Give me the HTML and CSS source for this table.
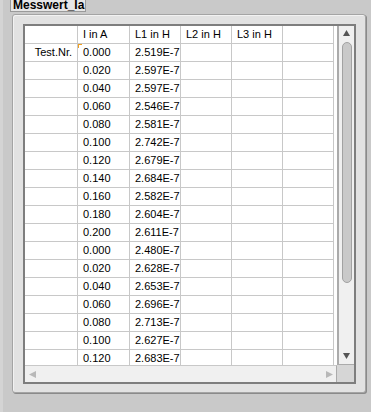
FILE: index.html
```html
<!DOCTYPE html>
<html lang="de">
<head>
    <meta charset="UTF-8">
    <meta name="viewport" content="width=device-width, initial-scale=1.0">
    <title>Messwert_Ia</title>
    <link rel="stylesheet" href="styles.css">
</head>
<body>
    <div class="caption">Messwert_Ia</div>
    <div class="frame">
        <div class="table-box">
            <div class="grid">
                <table>
                    <tr>
                        <th class="rowhead c1"></th>
                        <th class="c2">I in A</th>
                        <th class="c3">L1 in H</th>
                        <th class="c4">L2 in H</th>
                        <th class="c5">L3 in H</th>
                        <th class="c6"></th>
                    </tr>
                    <tr><th class="rowhead">Test.Nr.</th><td class="current">0.000</td><td>2.519E-7</td><td></td><td></td><td></td></tr>
                    <tr><th class="rowhead"></th><td>0.020</td><td>2.597E-7</td><td></td><td></td><td></td></tr>
                    <tr><th class="rowhead"></th><td>0.040</td><td>2.597E-7</td><td></td><td></td><td></td></tr>
                    <tr><th class="rowhead"></th><td>0.060</td><td>2.546E-7</td><td></td><td></td><td></td></tr>
                    <tr><th class="rowhead"></th><td>0.080</td><td>2.581E-7</td><td></td><td></td><td></td></tr>
                    <tr><th class="rowhead"></th><td>0.100</td><td>2.742E-7</td><td></td><td></td><td></td></tr>
                    <tr><th class="rowhead"></th><td>0.120</td><td>2.679E-7</td><td></td><td></td><td></td></tr>
                    <tr><th class="rowhead"></th><td>0.140</td><td>2.684E-7</td><td></td><td></td><td></td></tr>
                    <tr><th class="rowhead"></th><td>0.160</td><td>2.582E-7</td><td></td><td></td><td></td></tr>
                    <tr><th class="rowhead"></th><td>0.180</td><td>2.604E-7</td><td></td><td></td><td></td></tr>
                    <tr><th class="rowhead"></th><td>0.200</td><td>2.611E-7</td><td></td><td></td><td></td></tr>
                    <tr><th class="rowhead"></th><td>0.000</td><td>2.480E-7</td><td></td><td></td><td></td></tr>
                    <tr><th class="rowhead"></th><td>0.020</td><td>2.628E-7</td><td></td><td></td><td></td></tr>
                    <tr><th class="rowhead"></th><td>0.040</td><td>2.653E-7</td><td></td><td></td><td></td></tr>
                    <tr><th class="rowhead"></th><td>0.060</td><td>2.696E-7</td><td></td><td></td><td></td></tr>
                    <tr><th class="rowhead"></th><td>0.080</td><td>2.713E-7</td><td></td><td></td><td></td></tr>
                    <tr><th class="rowhead"></th><td>0.100</td><td>2.627E-7</td><td></td><td></td><td></td></tr>
                    <tr><th class="rowhead"></th><td>0.120</td><td>2.683E-7</td><td></td><td></td><td></td></tr>
                </table>
            </div>
            <div class="vscroll">
                <svg class="arrow" width="7" height="6" viewBox="0 0 7 6"><path d="M3.5 0 L7 6 L0 6 Z" fill="#555"/></svg>
                <div class="thumb"></div>
                <svg class="arrow down" width="7" height="6" viewBox="0 0 7 6"><path d="M0 0 L7 0 L3.5 6 Z" fill="#555"/></svg>
            </div>
            <div class="hscroll">
                <svg width="7" height="7" viewBox="0 0 7 7"><path d="M0 3.5 L7 0 L7 7 Z" fill="#b8b8b8"/></svg>
                <svg width="7" height="7" viewBox="0 0 7 7"><path d="M7 3.5 L0 0 L0 7 Z" fill="#b8b8b8"/></svg>
            </div>
            <div class="corner"></div>
        </div>
    </div>
</body>
</html>
```

FILE: styles.css
```css
body {
    margin: 0;
    height: 412px;
    overflow: hidden;
    background: linear-gradient(to right, #d4d4d4 3px, #c9c9c9 3px);
    font-family: "Liberation Sans", Arial, sans-serif;
}
.caption {
    width: fit-content;
    height: 11px;
    margin-left: 10px;
    padding: 0 1px 0 2px;
    border: 1px solid #9a9a9a;
    border-top: none;
    background: #e6e6e6;
    font-size: 12px;
    font-weight: bold;
    line-height: 11px;
    color: #000;
}
.frame {
    box-sizing: border-box;
    width: 354px;
    height: 379px;
    margin: 2px 0 0 12px;
    padding: 9px 0 0 10px;
    background: #e2e2e2;
    border: 1px solid #a4a4a4;
    border-radius: 3px;
    box-shadow: inset 1px 1px 0 #f2f2f2, 1px 1px 0 #8a8a8a;
}
.table-box {
    display: grid;
    grid-template-columns: 312px 17px;
    grid-template-rows: 339px 17px;
    width: 329px;
    border: 2px solid #7e7e7e;
}
.grid {
    background: #fff;
    overflow: hidden;
}
table {
    width: 309px;
    table-layout: fixed;
    border-collapse: separate;
    border-spacing: 0;
    font-size: 11px;
    color: #000;
}
th, td {
    box-sizing: border-box;
    padding: 0 0 0 5px;
    border-right: 1px solid #c8c8c8;
    border-bottom: 1px solid #c8c8c8;
    font-weight: normal;
    text-align: left;
    line-height: 17px;
    white-space: nowrap;
    overflow: hidden;
}
.c1 { width: 53px; }
.c2 { width: 52px; }
.c3, .c4, .c5, .c6 { width: 51px; }
.rowhead {
    padding: 0 5px 0 0;
    text-align: right;
}
/* orange corner on the active cell */
.current {
    position: relative;
}
.current::before {
    content: "";
    position: absolute;
    left: 0;
    top: 0;
    width: 3px;
    height: 3px;
    border-left: 1px solid #f0a020;
    border-top: 1px solid #f0a020;
}
.vscroll {
    box-sizing: border-box;
    display: flex;
    flex-direction: column;
    align-items: flex-start;
    padding: 4px 0 5px;
    background: #f0f0f0;
    border-left: 2px solid #ababab;
    border-bottom: 1px solid #ababab;
}
.vscroll .arrow {
    margin-left: 4px;
}
.vscroll .down {
    margin-top: auto;
}
.thumb {
    box-sizing: border-box;
    width: 10px;
    height: 241px;
    margin: 6px 0 0 3px;
    background: #c9c9c9;
    border: 1px solid #a2a2a2;
    border-radius: 5px;
}
.hscroll {
    box-sizing: border-box;
    display: flex;
    justify-content: space-between;
    align-items: center;
    padding: 0 3px 0 4px;
    background: #f0f0f0;
    border-top: 1px solid #c8c8c8;
    border-right: 1px solid #ababab;
}
.corner {
    background: #d6d6d6;
}
```
